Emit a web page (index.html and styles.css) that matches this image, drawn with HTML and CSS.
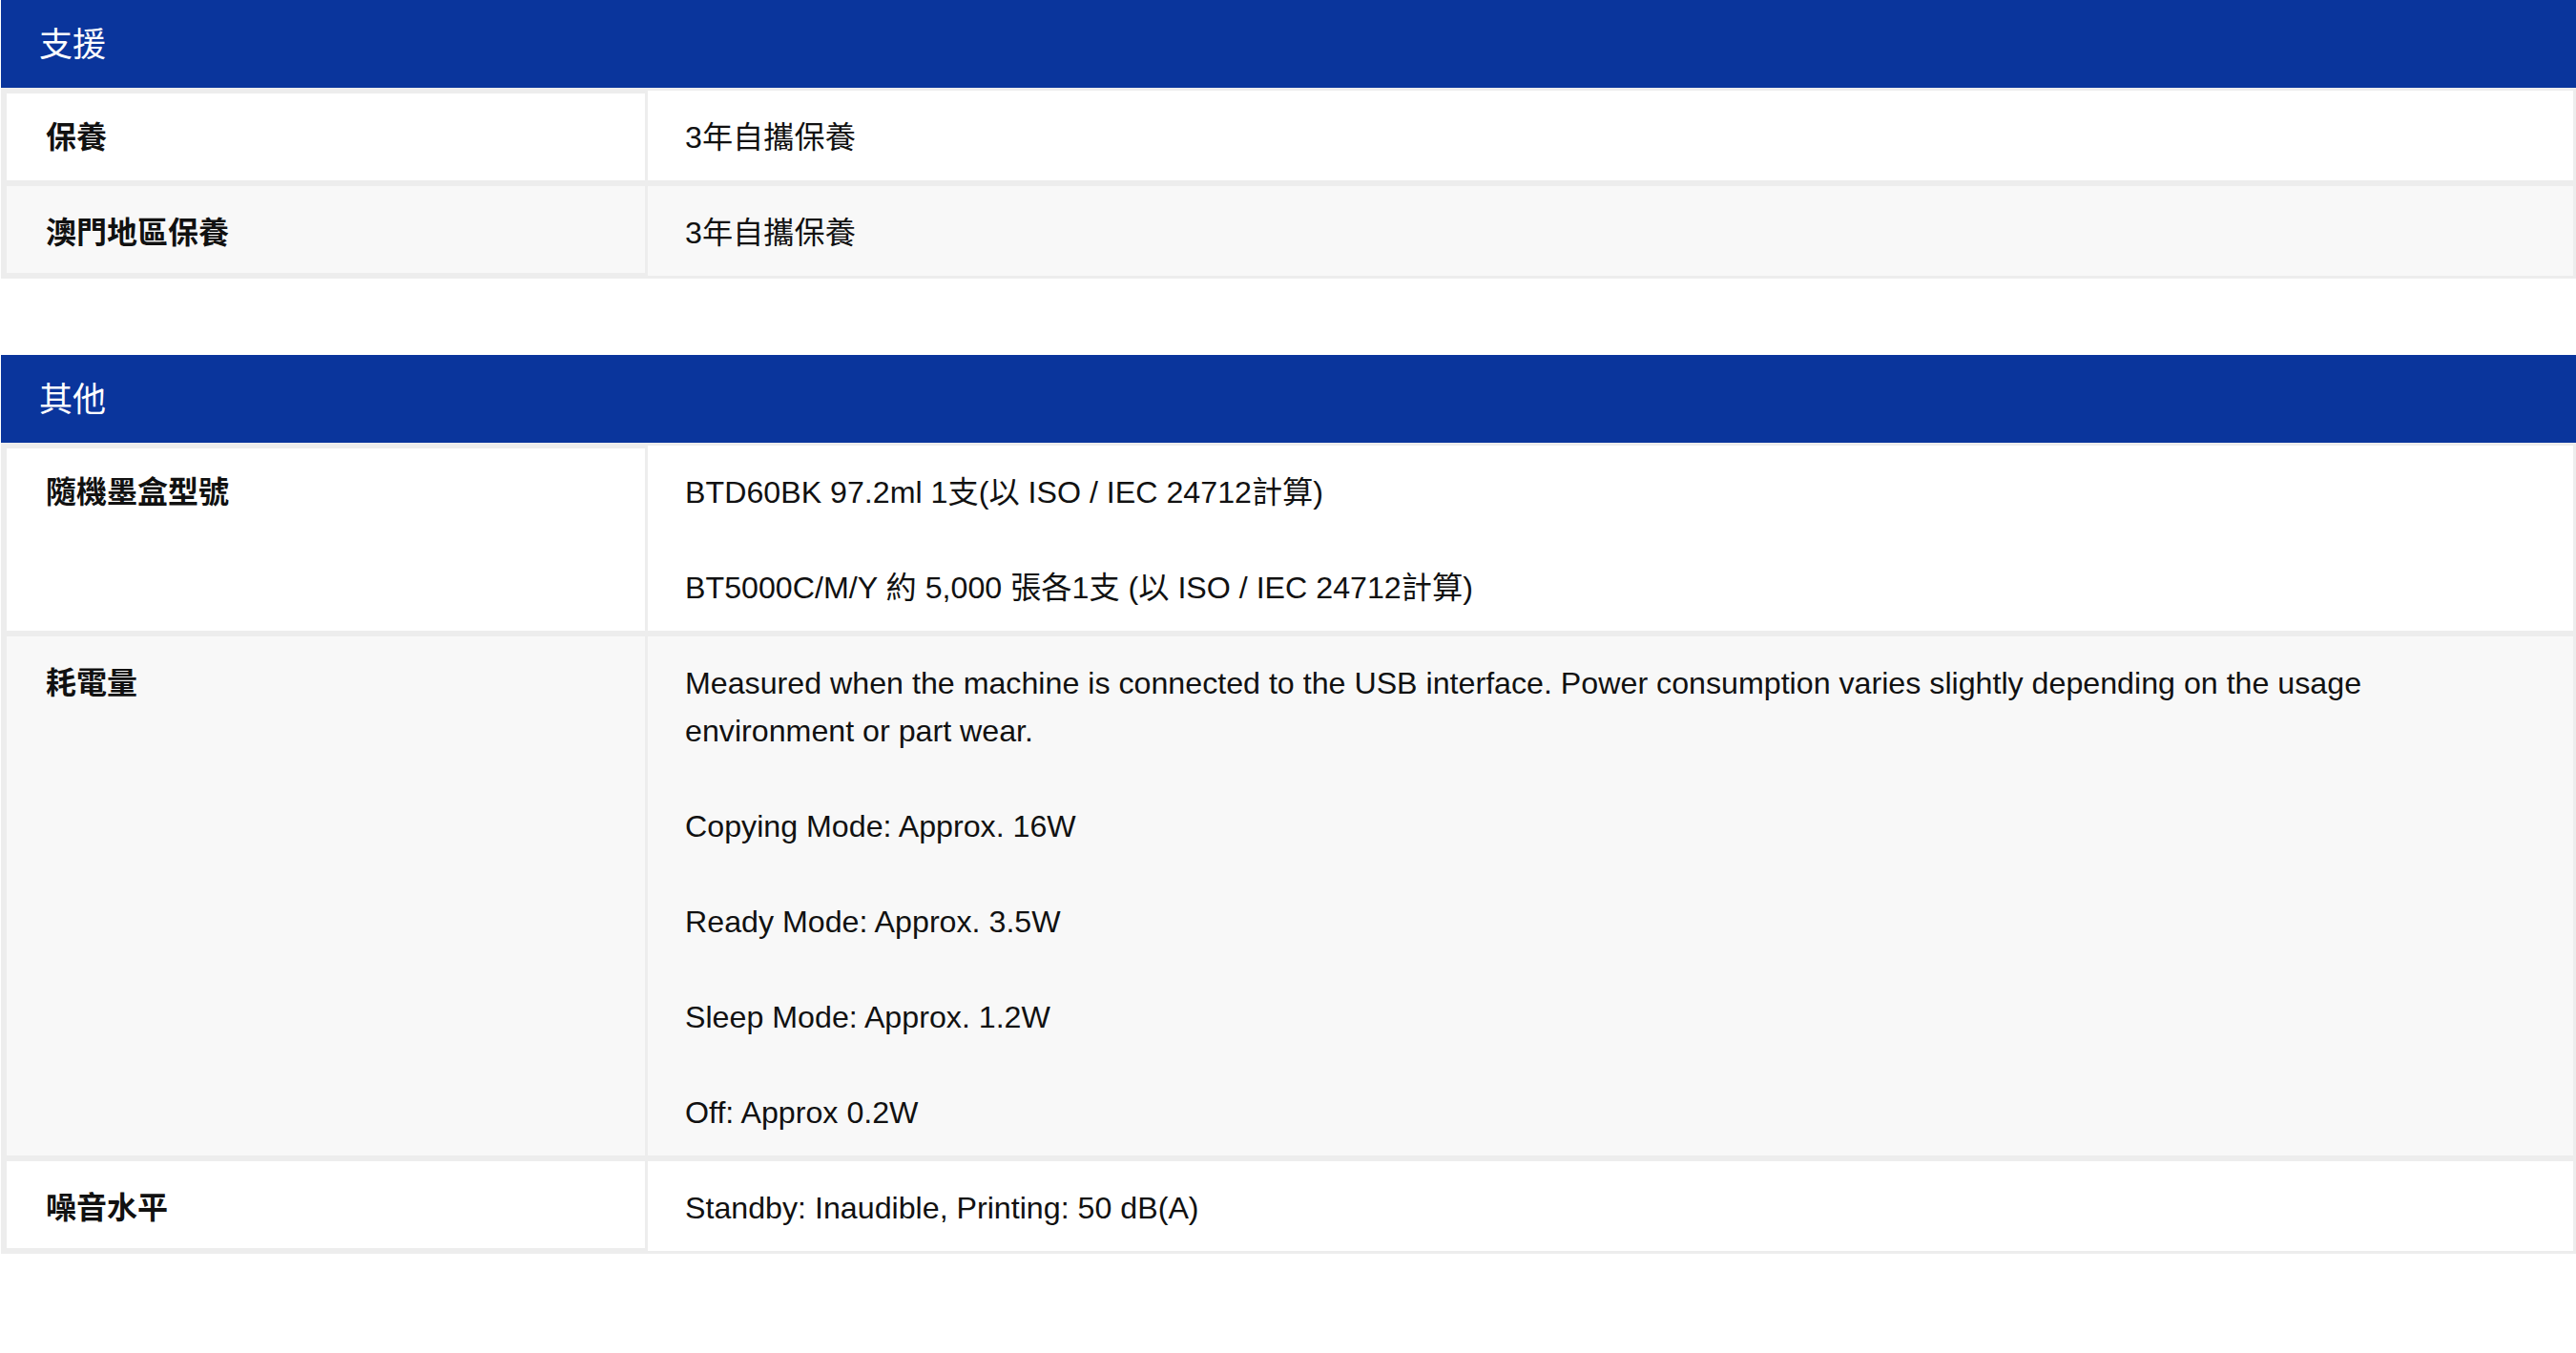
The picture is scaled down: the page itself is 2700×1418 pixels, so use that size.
FILE: index.html
```html
<!DOCTYPE html>
<html lang="zh-Hant">
<head>
<meta charset="utf-8">
<title>規格</title>
<link rel="stylesheet" href="styles.css">
</head>
<body>
<main class="specs">
  <section class="spec">
    <h2 class="spec-title">支援</h2>
    <div class="spec-row">
      <div class="spec-label">保養</div>
      <div class="spec-value"><p>3年自攜保養</p></div>
    </div>
    <div class="spec-row alt">
      <div class="spec-label">澳門地區保養</div>
      <div class="spec-value"><p>3年自攜保養</p></div>
    </div>
  </section>

  <section class="spec">
    <h2 class="spec-title">其他</h2>
    <div class="spec-row">
      <div class="spec-label">隨機墨盒型號</div>
      <div class="spec-value">
        <p>BTD60BK 97.2ml 1支(以 ISO / IEC 24712計算)</p>
        <p>BT5000C/M/Y 約 5,000 張各1支 (以 ISO / IEC 24712計算)</p>
      </div>
    </div>
    <div class="spec-row alt">
      <div class="spec-label">耗電量</div>
      <div class="spec-value">
        <p>Measured when the machine is connected to the USB interface. Power consumption varies slightly depending on the usage environment or part wear.</p>
        <p>Copying Mode: Approx. 16W</p>
        <p>Ready Mode: Approx. 3.5W</p>
        <p>Sleep Mode: Approx. 1.2W</p>
        <p>Off: Approx 0.2W</p>
      </div>
    </div>
    <div class="spec-row">
      <div class="spec-label">噪音水平</div>
      <div class="spec-value"><p>Standby: Inaudible, Printing: 50 dB(A)</p></div>
    </div>
  </section>
</main>
</body>
</html>
```

FILE: styles.css
```css
html, body {
  margin: 0;
  padding: 0;
  background: #ffffff;
}

body {
  font-family: "Liberation Sans", "Noto Sans CJK TC", sans-serif;
  color: #111111;
}

.specs {
  padding-left: 1px;
}

.spec {
  margin-bottom: 80px;
}

.spec-title {
  margin: 0;
  height: 92px;
  box-sizing: border-box;
  padding: 0 40px 5px;
  display: flex;
  align-items: center;
  background: #0a359c;
  color: #ffffff;
  font-size: 35px;
  font-weight: 400;
  font-family: "Liberation Sans", "Noto Sans CJK TC", sans-serif;
}

.spec-row {
  display: grid;
  grid-template-columns: 678px 1fr;
  background: #ffffff;
}

.spec-row.alt {
  background: #f8f8f8;
}

.spec-label {
  border-style: solid;
  border-color: #ededed;
  border-width: 3px 3px 3px 6px;
  padding: 24px 40px 20px 41px;
  font-size: 32px;
  line-height: 50px;
  font-weight: 700;
}

.spec-title + .spec-row .spec-label {
  border-top-width: 6px;
  padding-top: 21px;
}

.spec-row:last-child .spec-label {
  border-bottom-width: 6px;
  padding-bottom: 17px;
}

.spec-value {
  border-style: solid;
  border-color: #ededed;
  border-width: 3px 3px 3px 0;
  padding: 24px 40px 20px 39px;
  font-size: 32.2px;
  line-height: 50px;
}

.spec-value p {
  margin: 0;
}

.spec-value p + p {
  margin-top: 50px;
}
```
